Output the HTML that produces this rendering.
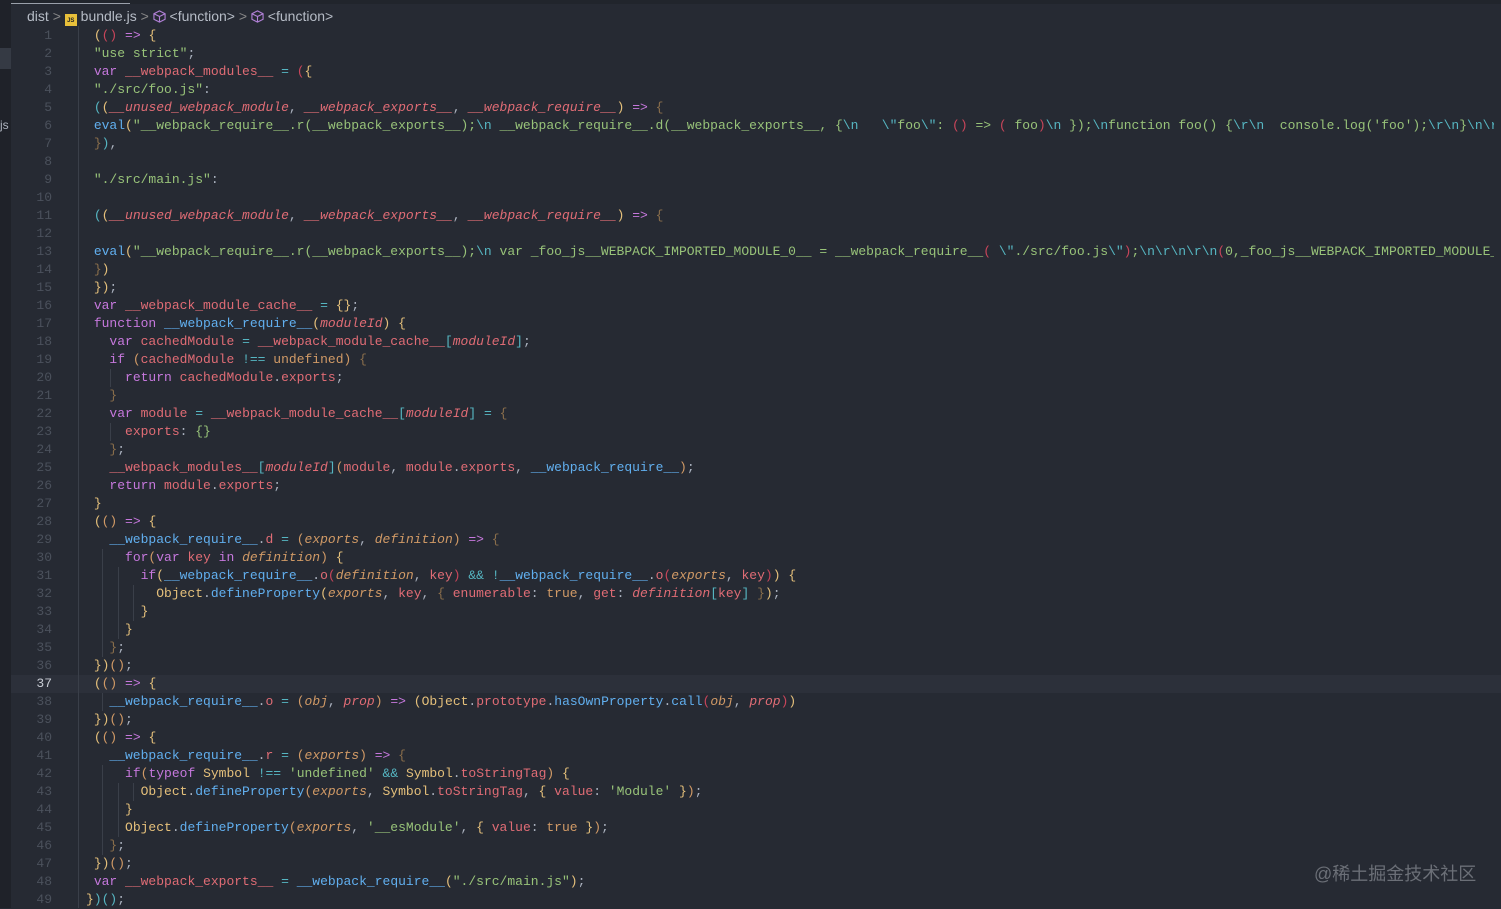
<!DOCTYPE html>
<html><head><meta charset="utf-8"><style>
body{margin:0;width:1501px;height:908px;background:#262a33;overflow:hidden;position:relative;font-family:"Liberation Mono",monospace;}
#side{position:absolute;left:0;top:0;width:11px;height:908px;background:#1f2229;}
#side .hl{position:absolute;left:0;top:48px;width:11px;height:21px;background:#353a44;}
#js{position:absolute;left:0;top:118px;font:12px "Liberation Sans",sans-serif;color:#aeb4bf;}
#tabline{position:absolute;left:11px;top:0;width:1490px;height:4px;background:#21252c;}
#tabline div{position:absolute;left:0;top:3px;width:119px;height:1px;background:#9aa0aa;}
#crumb{position:absolute;left:27px;top:8px;font:14px "Liberation Sans",sans-serif;color:#b6bcc6;white-space:pre;}
.jsic{display:inline-block;width:12px;height:12px;background:#e8c03a;color:#222;font-size:6px;line-height:14px;text-align:center;vertical-align:-1px;font-weight:bold}
.box{display:inline-block;vertical-align:-2px}
#gut{position:absolute;left:78px;top:26px;width:1px;height:882px;background:#3a3f49;}
.cur{position:absolute;left:11px;top:675px;width:1490px;height:18px;background:#2c303a;}
.ln{position:absolute;left:20px;width:32px;text-align:right;font-size:13px;color:#4b515c;line-height:18px;}
#code{position:absolute;left:86px;top:27px;font-size:13px;line-height:18px;color:#abb2bf;white-space:pre;width:1408px;overflow:hidden;}
.g{position:absolute;width:1px;background:#3a3f49;}
.k{color:#c678dd}.v{color:#e06c75}.f{color:#61afef}.s{color:#98c379}.e{color:#56b6c2}
.p{color:#e06c75;font-style:italic}.q{color:#d19a66;font-style:italic}.o{color:#d19a66}.y{color:#e5c07b}
.b{color:#e5c07b}.m{color:#c678dd}.c{color:#56b6c2}.d{color:#8a6e4b}.r{color:#c8455a}
#wm{position:absolute;left:1314px;top:860px;font:18px "Liberation Sans","Noto Sans CJK SC",sans-serif;color:#6b6f77;}
</style></head><body>
<div id="side"><div class="hl"></div></div>
<div id="js">js</div>
<div id="tabline"><div></div></div>
<div id="crumb">dist <span style="color:#888">&gt;</span> <span class="jsic">JS</span> bundle.js <span style="color:#888">&gt;</span> <svg class="box" width="13" height="13" viewBox="0 0 14 14" fill="none" stroke="#b180d7" stroke-width="1.2"><path d="M7 1L13 4V10L7 13L1 10V4Z M1 4L7 7L13 4 M7 7V13"/></svg> &lt;function&gt; <span style="color:#888">&gt;</span> <svg class="box" width="13" height="13" viewBox="0 0 14 14" fill="none" stroke="#b180d7" stroke-width="1.2"><path d="M7 1L13 4V10L7 13L1 10V4Z M1 4L7 7L13 4 M7 7V13"/></svg> &lt;function&gt;</div>
<div class="cur"></div>
<div id="gut"></div>
<div id="lns"></div>
<div class="g" style="left:110px;top:369px;height:18px"></div>
<div class="g" style="left:110px;top:423px;height:18px"></div>
<div class="g" style="left:102px;top:549px;height:108px"></div>
<div class="g" style="left:118px;top:567px;height:72px"></div>
<div class="g" style="left:133px;top:585px;height:36px"></div>
<div class="g" style="left:102px;top:693px;height:18px"></div>
<div class="g" style="left:102px;top:765px;height:90px"></div>
<div class="g" style="left:118px;top:783px;height:54px"></div>
<div class="g" style="left:133px;top:783px;height:18px"></div>
<div id="code"> <span class="b">(</span><span class="r">()</span> <span class="m">=&gt;</span> <span class="b">{</span>
 <span class="s">"use strict"</span>;
 <span class="k">var</span> <span class="v">__webpack_modules__</span> <span class="c">=</span> <span class="r">(</span><span class="b">{</span>
 <span class="s">"./src/foo.js"</span>:
 <span class="c">(</span><span class="b">(</span><span class="p">__unused_webpack_module</span>, <span class="p">__webpack_exports__</span>, <span class="p">__webpack_require__</span><span class="b">)</span> <span class="m">=&gt;</span> <span class="d">{</span>
 <span class="f">eval</span><span class="b">(</span><span class="s">"__webpack_require__.r(__webpack_exports__);</span><span class="e">\n</span><span class="s"> __webpack_require__.d(__webpack_exports__, {</span><span class="e">\n</span><span class="s">   </span><span class="e">\"</span><span class="s">foo</span><span class="e">\"</span><span class="s">: </span><span class="r">()</span><span class="s"> =&gt; </span><span class="r">(</span><span class="s"> foo</span><span class="r">)</span><span class="e">\n</span><span class="s"> });</span><span class="e">\n</span><span class="s">function foo() {</span><span class="e">\r\n</span><span class="s">  console.log('foo');</span><span class="e">\r\n</span><span class="s">}</span><span class="e">\n\r\n</span>
 <span class="d">}</span><span class="c">)</span>,

 <span class="s">"./src/main.js"</span>:

 <span class="c">(</span><span class="b">(</span><span class="p">__unused_webpack_module</span>, <span class="p">__webpack_exports__</span>, <span class="p">__webpack_require__</span><span class="b">)</span> <span class="m">=&gt;</span> <span class="d">{</span>

 <span class="f">eval</span><span class="b">(</span><span class="s">"__webpack_require__.r(__webpack_exports__);</span><span class="e">\n</span><span class="s"> var _foo_js__WEBPACK_IMPORTED_MODULE_0__ = __webpack_require__</span><span class="r">(</span><span class="s"> </span><span class="e">\"</span><span class="s">./src/foo.js</span><span class="e">\"</span><span class="r">)</span><span class="s">;</span><span class="e">\n\r\n\r\n</span><span class="r">(</span><span class="s">0,_foo_js__WEBPACK_IMPORTED_MODULE_0__.foo)</span>
 <span class="d">}</span><span class="b">)</span>
 <span class="b">})</span>;
 <span class="k">var</span> <span class="v">__webpack_module_cache__</span> <span class="c">=</span> <span class="b">{}</span>;
 <span class="k">function</span> <span class="f">__webpack_require__</span><span class="b">(</span><span class="p">moduleId</span><span class="b">)</span> <span class="b">{</span>
   <span class="k">var</span> <span class="v">cachedModule</span> <span class="c">=</span> <span class="v">__webpack_module_cache__</span><span class="c">[</span><span class="p">moduleId</span><span class="c">]</span>;
   <span class="k">if</span> <span class="o">(</span><span class="v">cachedModule</span> <span class="c">!==</span> <span class="o">undefined</span><span class="o">)</span> <span class="d">{</span>
     <span class="k">return</span> <span class="v">cachedModule</span>.<span class="v">exports</span>;
   <span class="d">}</span>
   <span class="k">var</span> <span class="v">module</span> <span class="c">=</span> <span class="v">__webpack_module_cache__</span><span class="c">[</span><span class="p">moduleId</span><span class="c">]</span> <span class="c">=</span> <span class="d">{</span>
     <span class="v">exports</span>: <span class="s">{}</span>
   <span class="d">}</span>;
   <span class="v">__webpack_modules__</span><span class="c">[</span><span class="p">moduleId</span><span class="c">]</span><span class="o">(</span><span class="v">module</span>, <span class="v">module</span>.<span class="v">exports</span>, <span class="f">__webpack_require__</span><span class="o">)</span>;
   <span class="k">return</span> <span class="v">module</span>.<span class="v">exports</span>;
 <span class="b">}</span>
 <span class="b">(</span><span class="o">()</span> <span class="m">=&gt;</span> <span class="b">{</span>
   <span class="f">__webpack_require__</span>.<span class="v">d</span> <span class="c">=</span> <span class="o">(</span><span class="q">exports</span>, <span class="q">definition</span><span class="o">)</span> <span class="m">=&gt;</span> <span class="d">{</span>
     <span class="k">for</span><span class="o">(</span><span class="k">var</span> <span class="v">key</span> <span class="k">in</span> <span class="q">definition</span><span class="o">)</span> <span class="b">{</span>
       <span class="k">if</span><span class="b">(</span><span class="f">__webpack_require__</span>.<span class="v">o</span><span class="r">(</span><span class="q">definition</span>, <span class="v">key</span><span class="r">)</span> <span class="c">&amp;&amp;</span> <span class="c">!</span><span class="f">__webpack_require__</span>.<span class="v">o</span><span class="r">(</span><span class="q">exports</span>, <span class="v">key</span><span class="r">)</span><span class="b">)</span> <span class="b">{</span>
         <span class="y">Object</span>.<span class="f">defineProperty</span><span class="b">(</span><span class="q">exports</span>, <span class="v">key</span>, <span class="d">{</span> <span class="v">enumerable</span>: <span class="o">true</span>, <span class="v">get</span>: <span class="p">definition</span><span class="c">[</span><span class="v">key</span><span class="c">]</span> <span class="d">}</span><span class="b">)</span>;
       <span class="b">}</span>
     <span class="b">}</span>
   <span class="d">}</span>;
 <span class="b">})</span><span class="o">()</span>;
 <span class="b">(</span><span class="o">()</span> <span class="m">=&gt;</span> <span class="b">{</span>
   <span class="f">__webpack_require__</span>.<span class="v">o</span> <span class="c">=</span> <span class="o">(</span><span class="q">obj</span>, <span class="p">prop</span><span class="o">)</span> <span class="m">=&gt;</span> <span class="b">(</span><span class="y">Object</span>.<span class="v">prototype</span>.<span class="f">hasOwnProperty</span>.<span class="f">call</span><span class="r">(</span><span class="q">obj</span>, <span class="p">prop</span><span class="r">)</span><span class="b">)</span>
 <span class="b">})</span><span class="o">()</span>;
 <span class="b">(</span><span class="o">()</span> <span class="m">=&gt;</span> <span class="b">{</span>
   <span class="f">__webpack_require__</span>.<span class="v">r</span> <span class="c">=</span> <span class="o">(</span><span class="q">exports</span><span class="o">)</span> <span class="m">=&gt;</span> <span class="d">{</span>
     <span class="k">if</span><span class="o">(</span><span class="k">typeof</span> <span class="y">Symbol</span> <span class="c">!==</span> <span class="s">'undefined'</span> <span class="c">&amp;&amp;</span> <span class="y">Symbol</span>.<span class="v">toStringTag</span><span class="o">)</span> <span class="b">{</span>
       <span class="y">Object</span>.<span class="f">defineProperty</span><span class="o">(</span><span class="q">exports</span>, <span class="y">Symbol</span>.<span class="v">toStringTag</span>, <span class="b">{</span> <span class="v">value</span>: <span class="s">'Module'</span> <span class="b">}</span><span class="o">)</span>;
     <span class="b">}</span>
     <span class="y">Object</span>.<span class="f">defineProperty</span><span class="o">(</span><span class="q">exports</span>, <span class="s">'__esModule'</span>, <span class="b">{</span> <span class="v">value</span>: <span class="o">true</span> <span class="b">}</span><span class="o">)</span>;
   <span class="d">}</span>;
 <span class="b">})</span><span class="o">()</span>;
 <span class="k">var</span> <span class="v">__webpack_exports__</span> <span class="c">=</span> <span class="f">__webpack_require__</span><span class="b">(</span><span class="s">"./src/main.js"</span><span class="b">)</span>;
<span class="b">}</span><span class="c">)()</span>;</div>
<div id="wm">@稀土掘金技术社区</div>
<script>
var h='';for(var i=1;i<=49;i++){h+='<div class="ln" style="top:'+(27+(i-1)*18)+'px;'+(i==37?'color:#c8ccd4':'')+'">'+i+'</div>';}
document.getElementById('lns').innerHTML=h;
</script>
</body></html>
